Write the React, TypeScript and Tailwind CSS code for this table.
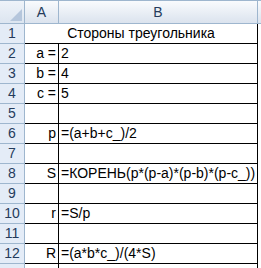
const FONT = "font-['Liberation_Sans',Arial,sans-serif]";

const ROWS = [
  { n: 2, a: "a =", b: "2" },
  { n: 3, a: "b =", b: "4" },
  { n: 4, a: "c =", b: "5" },
  { n: 5, a: "", b: "" },
  { n: 6, a: "p", b: "=(a+b+c_)/2" },
  { n: 7, a: "", b: "" },
  { n: 8, a: "S", b: "=КОРЕНЬ(p*(p-a)*(p-b)*(p-c_))" },
  { n: 9, a: "", b: "" },
  { n: 10, a: "r", b: "=S/p" },
  { n: 11, a: "", b: "" },
  { n: 12, a: "R", b: "=(a*b*c_)/(4*S)" },
];

function RowHead({ n }: { n?: number }) {
  return (
    <div className="flex h-full w-[25px] shrink-0 items-center justify-center border-r border-b border-[#9eb6ce] bg-[#e4ecf7] text-[14px] text-[#253b5b]">
      {n}
    </div>
  );
}

export default function App() {
  return (
    <div className={`h-[268px] w-[261px] overflow-hidden bg-white text-black ${FONT}`}>
      {/* column headers */}
      <div className="flex h-[24px] border-t border-b border-[#9eb6ce] bg-gradient-to-b from-[#f9fbfd] to-[#dbe3ee]">
        <div className="relative w-[25px] shrink-0 border-r border-[#9eb6ce] bg-gradient-to-b from-[#eef3f9] to-[#dce5f0]">
          <svg className="absolute right-[2px] bottom-[2px]" width="12" height="12" viewBox="0 0 12 12">
            <polygon points="12,0 12,12 0,12" fill="#b5c6dc" />
          </svg>
        </div>
        <div className="flex w-[34px] shrink-0 items-center justify-center border-r border-[#9eb6ce] text-[14px] text-[#253b5b]">
          A
        </div>
        <div className="flex w-[199px] shrink-0 items-center justify-center border-r border-[#9eb6ce] text-[14px] text-[#253b5b]">
          B
        </div>
        <div className="flex-1" />
      </div>

      {/* row 1, merged A1:B1 */}
      <div className="flex h-[20px]">
        <RowHead n={1} />
        <div className="flex w-[233px] shrink-0 items-end justify-center border-r border-b border-black pb-[1px] text-[14px] leading-[17px]">
          Стороны треугольника
        </div>
        <div className="flex-1" />
      </div>

      {ROWS.map((r) => (
        <div key={r.n} className="flex h-[20px]">
          <RowHead n={r.n} />
          <div className="flex w-[34px] shrink-0 items-end justify-end border-r border-b border-black pr-[2px] pb-[1px] text-[14px] leading-[17px]">
            {r.a}
          </div>
          <div className="flex w-[199px] shrink-0 items-end whitespace-nowrap border-r border-b border-black pl-[2px] pb-[1px] text-[14px] leading-[17px]">
            {r.b}
          </div>
          <div className="flex-1" />
        </div>
      ))}

      {/* row 13, only a sliver shows */}
      <div className="flex h-[20px]">
        <RowHead />
        <div className="w-[34px] shrink-0 border-r border-black" />
        <div className="w-[199px] shrink-0 border-r border-black" />
        <div className="flex-1" />
      </div>
    </div>
  );
}
